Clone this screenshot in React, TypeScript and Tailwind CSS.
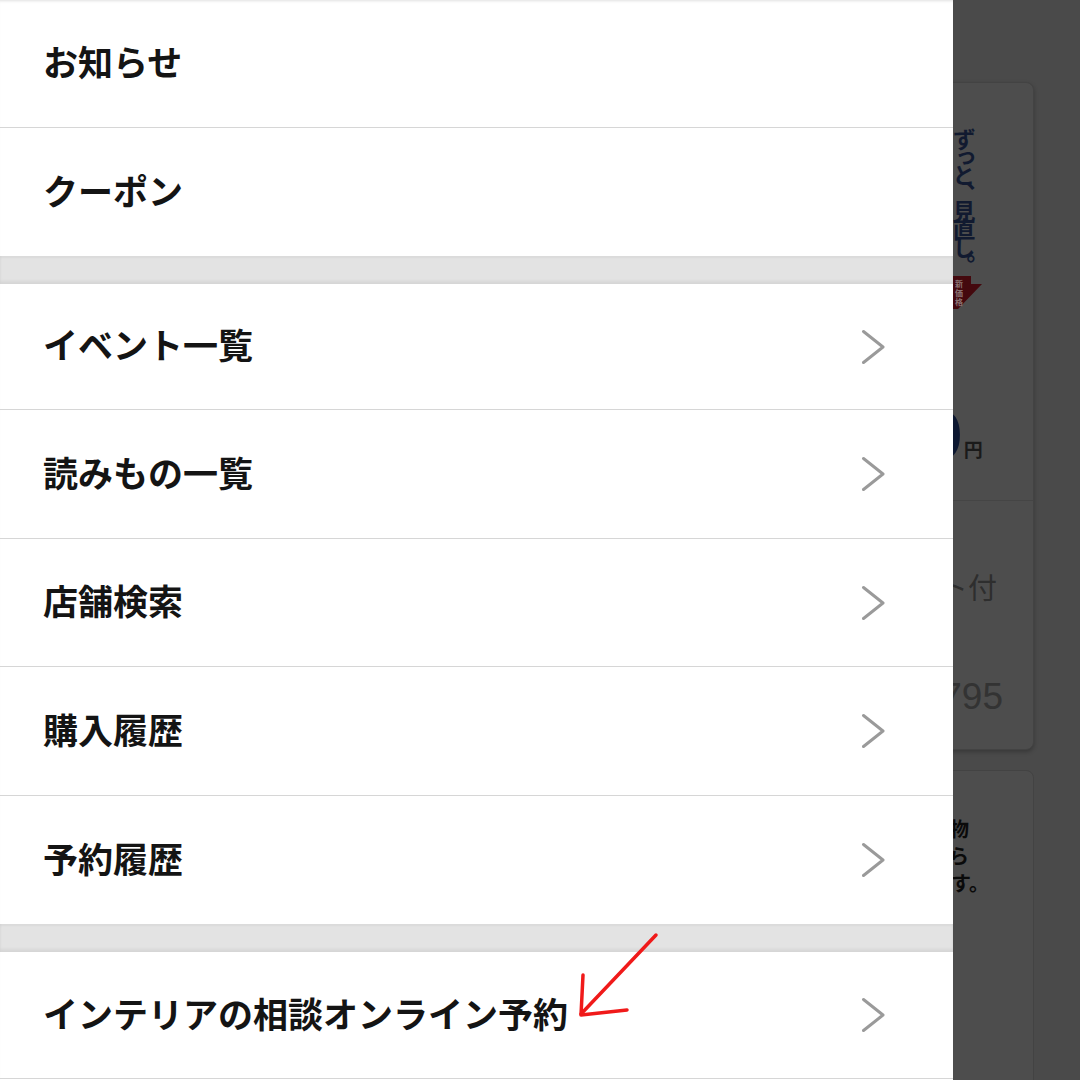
import React from "react";

const font = { fontFamily: '"Noto Sans CJK JP", "Noto Sans", sans-serif' };

function Chevron() {
  return (
    <svg width="24" height="36" viewBox="0 0 24 36" className="shrink-0">
      <polyline points="2.5,2.5 22,18 2.5,33.5" fill="none" stroke="#9a9a9a" strokeWidth="3" strokeLinecap="round" strokeLinejoin="round" />
    </svg>
  );
}

function Row({ label, h, chevron = true, border = true }: { label: string; h: string; chevron?: boolean; border?: boolean }) {
  return (
    <div className={`flex items-center justify-between pl-[43px] pr-[68px] ${h} ${border ? "border-b border-[#d6d6d6]" : ""}`}>
      <span className="mb-[6px] text-[35px] font-bold leading-none text-[#141414] whitespace-nowrap">{label}</span>
      {chevron && <Chevron />}
    </div>
  );
}

function Band() {
  return <div className="h-[28px] bg-[#e3e3e3] shadow-[inset_0_2px_2px_rgba(0,0,0,0.04),inset_0_-3px_3px_rgba(0,0,0,0.06)]" />;
}

export default function App() {
  return (
    <div className="relative w-[1080px] h-[1080px] overflow-hidden bg-[#4a4a4a]" style={font}>
      {/* background page (dimmed) */}
      <div className="flex flex-col items-end pr-[46px] pt-[82px] gap-[20px]">
        <div className="w-[1010px] h-[668px] rounded-lg bg-[#4d4d4d] border border-[#434343] shadow-[0_2px_4px_rgba(0,0,0,0.25)] flex flex-col">
          <div className="h-[418px] border-b border-[#454545] flex justify-end pr-[20px]">
            <div className="w-[60px] flex flex-col pt-[45px]">
              <div className="ml-[-2px] w-[25px] text-[23px] font-bold text-[#111a30] leading-[25px] tracking-[-5px] h-[147px] [writing-mode:vertical-rl]">
                ずっと、見直し。
              </div>
              <svg width="34" height="34" viewBox="0 0 34 34" className="mt-[1px]">
                <polygon points="0,0 18,0 18,8 29,8 5,33 0,33" fill="#44090e" />
                <text x="2" y="11" fontSize="8" fill="#8a7272" fontWeight="bold">新</text>
                <text x="2" y="20" fontSize="8" fill="#8a7272" fontWeight="bold">価</text>
                <text x="2" y="29" fontSize="8" fill="#8a7272" fontWeight="bold">格</text>
              </svg>
              <div className="flex items-end mt-[94px]">
                <span className="ml-[-28px] text-[64px] font-bold leading-[52px] text-[#0c1730]">0</span>
                <span className="ml-[1px] text-[19px] font-bold leading-none text-[#1a1a1a] mb-[-2px]">円</span>
              </div>
            </div>
          </div>
          <div className="flex flex-col items-end">
            <div className="mt-[71px] mr-[36px] text-[29px] leading-none text-[#2e2e2e] whitespace-nowrap">ポイント付</div>
            <div className="mt-[77px] mr-[30px] text-[37px] leading-none text-[#333333] whitespace-nowrap" style={{ fontFamily: '"Liberation Sans", sans-serif' }}>1,795</div>
          </div>
        </div>
        <div className="w-[1010px] h-[400px] rounded-lg bg-[#4d4d4d] border border-[#434343] flex justify-end pr-[44px] pt-[44px]">
          <div className="w-[160px] text-[20px] font-bold leading-[27px] text-[#0a0a0a] flex flex-col">
            <span className="whitespace-nowrap text-right pr-[20px]">お得な買い物</span>
            <span className="whitespace-nowrap text-right pr-[20px]">ができるから</span>
            <span className="whitespace-nowrap text-right">お届けします。</span>
          </div>
        </div>
      </div>

      {/* drawer */}
      <div className="absolute left-0 top-0 w-[953px] h-[1080px] bg-white flex flex-col shadow-[inset_0_3px_3px_-2px_rgba(0,0,0,0.12)]">
        <Row label="お知らせ" h="h-[128px]" chevron={false} />
        <Row label="クーポン" h="h-[128px]" chevron={false} border={false} />
        <Band />
        <Row label="イベント一覧" h="h-[126px]" />
        <Row label="読みもの一覧" h="h-[129px]" />
        <Row label="店舗検索" h="h-[128px]" />
        <Row label="購入履歴" h="h-[129px]" />
        <Row label="予約履歴" h="h-[128px]" border={false} />
        <Band />
        <Row label="インテリアの相談オンライン予約" h="h-[127px]" />
      </div>

      {/* annotation arrow */}
      <svg className="absolute left-0 top-0 pointer-events-none" width="1080" height="1080" viewBox="0 0 1080 1080">
        <polyline points="656,935 581,1014" fill="none" stroke="#f01a1a" strokeWidth="3.5" strokeLinecap="round" />
        <polyline points="583,975 581,1015 627,1010" fill="none" stroke="#f01a1a" strokeWidth="3.5" strokeLinecap="round" strokeLinejoin="round" />
      </svg>
    </div>
  );
}
